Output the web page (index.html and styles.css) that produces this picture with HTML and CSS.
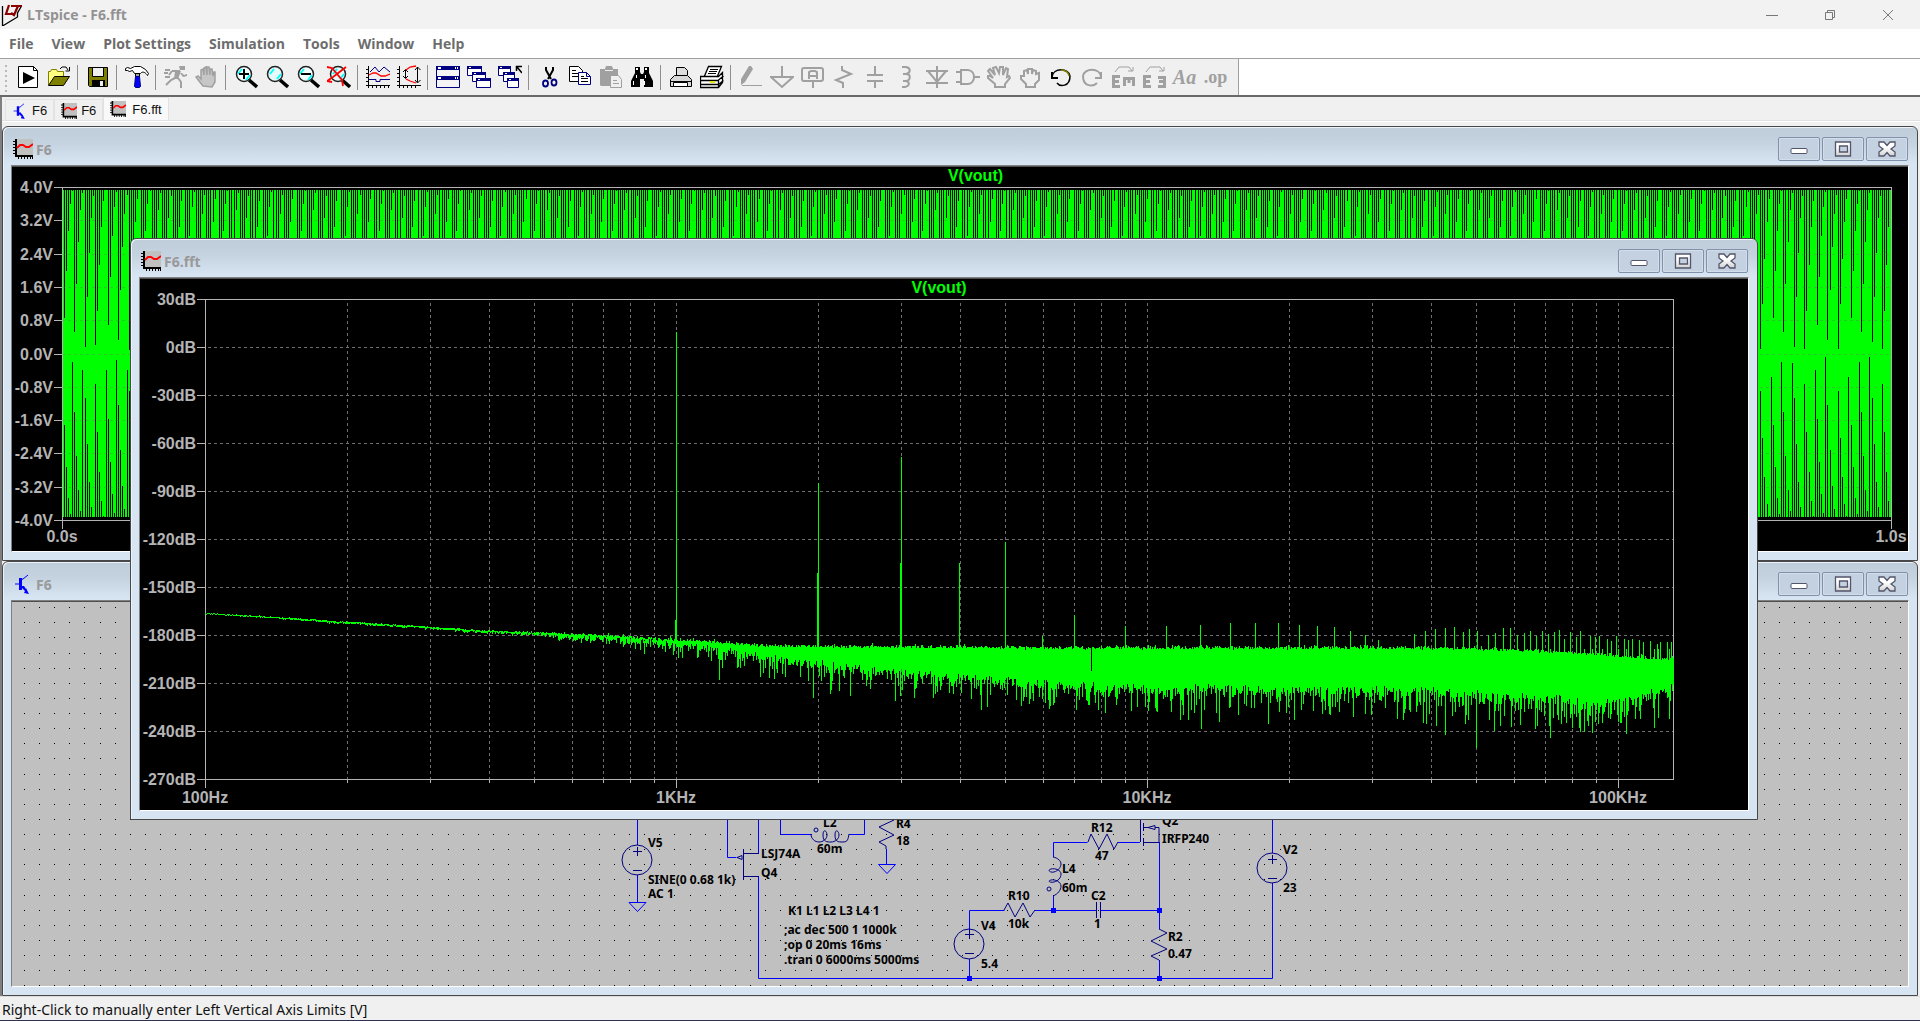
FILE: index.html
```html
<!DOCTYPE html>
<html lang="en">
<head>
<meta charset="utf-8">
<title>LTspice - F6.fft</title>
<link rel="stylesheet" href="styles.css">
</head>
<body>
<svg class="defs" aria-hidden="true">
  <symbol id="i-graph" viewBox="0 0 20 20"><path fill="#c0c0c0" d="M3 0h17v17H3z"/><path fill="#000" d="M2 0h2v18H2zM2 16h18v2H2zM0 2h2v1H0zM0 5h2v1H0zM0 8h2v1H0zM0 11h2v1H0zM0 14h2v1H0zM5 18h1v2H5zM8 18h1v2H8zM11 18h1v2h-1zM14 18h1v2h-1zM17 18h1v2h-1zM19 18h1v2h-1z"/><path fill="none" stroke="#f00" stroke-width="2" d="M4 9l3-3h3l3 2h3l4-3"/></symbol>
  <symbol id="i-npn" viewBox="0 0 20 20"><path fill="none" stroke="#00f" stroke-width="1" d="M2 10h5M7 6l3-1 5-4"/><path fill="#00f" d="M6 4h3v12H6zM9 12l2 0 2 3 0-1 3 6-5-1 1-2-3-3z"/></symbol>
  <linearGradient id="glyph" x1="0" y1="0" x2="0" y2="1"><stop offset="0.4" stop-color="#fff"/><stop offset="1" stop-color="#d0d0d0"/></linearGradient>
  <symbol id="w-min" viewBox="0 0 18 16"><rect x="1" y="7.500" width="16" height="5" rx="1" fill="#fff" stroke="#53566b"/></symbol>
  <symbol id="w-max" viewBox="0 0 18 16"><path fill="url(#glyph)" fill-rule="evenodd" stroke="#53566b" stroke-width="1.300" d="M1.500 1h15v14h-15zM5.500 5v6h8V5z"/></symbol>
  <symbol id="w-close" viewBox="0 0 18 16"><path fill="url(#glyph)" stroke="#53566b" stroke-width="1.300" d="M1 1h5l3 3.500L12 1h5v4l-4 3 4 3v4h-5l-3-3.500L6 15H1v-4l4-3-4-3z"/></symbol>
</svg>

<header class="titlebar">
  <svg class="logo" viewBox="0 0 22 22"><path fill="none" stroke="#000" stroke-width="1.300" d="M1.500 2v20l15-9v-4l4-7"/><path fill="none" stroke="#8b0000" stroke-width="2.200" d="M8 1L5 10h6"/><path fill="none" stroke="#8b0000" stroke-width="2.200" d="M10 2h11M17 2l-4 9-3-2"/></svg>
  <h1 class="app-title">LTspice - F6.fft</h1>
  <div class="sys">
    <button type="button" aria-label="Minimize"><svg viewBox="0 0 12 12"><path d="M0 6.500h12"/></svg></button>
    <button type="button" aria-label="Restore"><svg viewBox="0 0 12 12"><path d="M1.500 3.500h7v7h-7zM3.500 3.500v-2h7v7h-2"/></svg></button>
    <button type="button" aria-label="Close"><svg viewBox="0 0 12 12"><path d="M1 1l10 10M11 1L1 11"/></svg></button>
  </div>
</header>

<nav class="menu">
  <button type="button">File</button><button type="button">View</button><button type="button">Plot Settings</button><button type="button">Simulation</button><button type="button">Tools</button><button type="button">Window</button><button type="button">Help</button>
</nav>

<div class="toolrow">
<div class="toolbar" role="toolbar" aria-label="Main">
  <button type="button" aria-label="New schematic"><svg viewBox="0 0 24 24"><path fill="#fff" stroke="#000" d="M2.500 1.500h15l4 4v17h-19z"/><path fill="none" stroke="#000" d="M17.500 1.500v4h4"/><path d="M7 7l12 6-12 6z"/></svg></button>
  <button type="button" aria-label="Open"><svg viewBox="0 0 24 24"><path fill="#ffff80" stroke="#808000" d="M1.500 20V6.500h2l1-2h5l1 2h6v5"/><path fill="#808000" stroke="#000" d="M1.500 20.500l6-9h15l-6 9z"/><path fill="none" stroke="#000" d="M13 4l2-2h4l2 3M22.500 2v4h-4"/></svg></button>
  <i class="sep"></i>
  <button type="button" aria-label="Save"><svg viewBox="0 0 24 24"><path fill="#808000" stroke="#000" d="M2.500 2.500h19v19h-18l-1-1z"/><path fill="#efefef" stroke="#000" d="M6.500 2.500h11v9h-11z"/><path d="M6 15h13v6H6z"/><path fill="#efefef" d="M14 16h3v5h-3z"/></svg></button>
  <i class="sep"></i>
  <button type="button" aria-label="Control panel"><svg viewBox="0 0 24 24"><path fill="#fff" stroke="#000" d="M0.500 3.500l2-1 3 1 4-2h6l5 3 3 4-1 2c-2-3-4-4-6-3l-1 1h-6l-2-3-3 1-2-1-2 0z"/><path fill="#a0a0a0" stroke="#000" d="M10.500 8.500h4v3h-4z"/><path fill="#0000ff" stroke="#000080" d="M10.500 11.500h4l1 10-1 1h-4l-1-1z"/></svg></button>
  <i class="sep"></i>
  <button type="button" disabled aria-label="Run"><svg viewBox="0 0 24 24"><path class="g" d="M15 1h6v4h-5zM8 5h8v2H8zM11 6h6l-3 8h-4zM16 8h2l2 2 3-1v2l-4 1z"/><path class="gl2" d="M8 6L5 10M11 13l-4 2-5 5M14 13l3 4v6M1 5h5M0 8h4M1 12h5"/></svg></button>
  <button type="button" disabled aria-label="Halt"><svg viewBox="0 0 24 24"><path fill="#c6c6c6" stroke="#a0a0a0" stroke-width="1.500" d="M8 21l-4-5-3-4 2-1 3 3V5l2-1 1 6V3l2-1 1 8V2l2 0 1 8V4l2 0 1 7 1-4 1 0v10l-3 5z"/></svg></button>
  <i class="sep"></i>
  <button type="button" aria-label="Zoom in"><svg viewBox="0 0 24 24"><path stroke="#000" stroke-width="3.500" d="M15 15l8 7"/><circle cx="10" cy="9" r="7.500" fill="#f4ffff" stroke="#222" stroke-width="1.500"/><path stroke="#0ff" stroke-width="2" d="M4 9l4-5M12 15l4-5"/><path stroke="#000" stroke-width="2" d="M5 9h10M10 4v10"/></svg></button>
  <button type="button" aria-label="Zoom"><svg viewBox="0 0 24 24"><path stroke="#000" stroke-width="3.500" d="M15 15l8 7"/><circle cx="10" cy="9" r="7.500" fill="#e6fafa" stroke="#222" stroke-width="1.500"/><path stroke="#0ff" stroke-width="2" d="M5 9l4-5M12 14l4-5"/></svg></button>
  <button type="button" aria-label="Zoom out"><svg viewBox="0 0 24 24"><path stroke="#000" stroke-width="3.500" d="M15 15l8 7"/><circle cx="10" cy="9" r="7.500" fill="#f4ffff" stroke="#222" stroke-width="1.500"/><path stroke="#0ff" stroke-width="2" d="M4 9l4-5M12 15l4-5"/><path stroke="#000" stroke-width="2" d="M5 9h10"/></svg></button>
  <button type="button" aria-label="Zoom full extents"><svg viewBox="0 0 24 24"><path stroke="#000" stroke-width="3.500" d="M15 15l8 7"/><circle cx="11" cy="9" r="7.500" fill="#e6fafa" stroke="#222" stroke-width="1.500"/><path stroke="#0ff" stroke-width="2" d="M6 9l4-5M13 14l4-5"/><path fill="none" stroke="#f00" stroke-width="1.800" d="M0 2l5 1 10 12 1 6M19 2L6 12l-6 4 5 1"/></svg></button>
  <i class="sep"></i>
  <button type="button" aria-label="Autorange"><svg viewBox="0 0 24 24"><path stroke="#000" fill="none" d="M2.500 1v22M0 20.500h24M0 4.500h2M0 8.500h2M0 12.500h2M0 16.500h2M6.500 20v3M10.500 20v3M14.500 20v3M18.500 20v3M22.500 20v3"/><path stroke="#000080" fill="none" d="M4 7l5-5 4 5 5-5 6 5M3 14.500h7v2h4v-2h10"/><path stroke="#f00" fill="none" stroke-width="1.300" d="M3 10l4-2h3l5 3h4l5-2"/></svg></button>
  <button type="button" aria-label="Manual limits"><svg viewBox="0 0 24 24"><path stroke="#000" fill="none" d="M2.500 1v22M0 20.500h24M0 4.500h2M0 8.500h2M0 12.500h2M0 16.500h2M6.500 20v3M10.500 20v3M14.500 20v3M18.500 20v3M8.500 5v8M6 7l2.500-2.500L11 7M6 11l2.500 2.500L11 11M20.500 2v15M18 5l2.500-3 3 3M18 15l2.500 3 3-3"/><path stroke="#f00" fill="none" stroke-width="1.300" d="M9 5l4-3 6-1M9 14l4 2 6 2"/></svg></button>
  <i class="sep"></i>
  <button type="button" aria-label="Tile"><svg viewBox="0 0 24 24"><path fill="#f4f4f4" stroke="#000080" d="M.5 1.500h23v21H.5z"/><path fill="#000080" d="M0 1h24v4H0zM0 11h24v4H0z"/><path fill="#fff" d="M2 2h3v2H2zM19 2h1v2h-1zM21 2h1v2h-1zM2 12h3v2H2zM19 12h1v2h-1zM21 12h1v2h-1z"/></svg></button>
  <button type="button" aria-label="Cascade"><svg viewBox="0 0 24 24"><g fill="#fff" stroke="#000080"><path d="M.5 1.500h14v9H.5z"/><path d="M5.500 7.500h13v9h-13z"/><path d="M9.500 13.500h14v9h-14z"/></g><path fill="#000080" d="M0 1h15v3H0zM5 7h14v3H5zM9 13h15v3H9z"/><path fill="#fff" d="M2 2h2v1H2zM7 8h2v1H7zM11 14h2v1h-2z"/></svg></button>
  <button type="button" aria-label="Close all windows"><svg viewBox="0 0 24 24"><g fill="#fff" stroke="#000080"><path d="M.5 1.500h12v9H.5z"/><path d="M5.500 7.500h11v9h-11z"/><path d="M9.500 13.500h11v9h-11z"/></g><path fill="#000080" d="M0 1h13v3H0zM5 7h12v3H5zM9 13h12v3H9z"/><path fill="#fff" d="M2 2h2v1H2zM7 8h2v1H7zM11 14h2v1h-2z"/><path fill="none" stroke="#000" stroke-width="1.500" d="M18.500 6V1.500H24M19 2l5 6"/></svg></button>
  <i class="sep"></i>
  <button type="button" aria-label="Cut"><svg viewBox="0 0 24 24"><path fill="none" stroke="#000" stroke-width="2" d="M9 2v3l5 9M16 2v3l-5 9"/><g fill="none" stroke="#000080" stroke-width="1.800"><ellipse cx="8.500" cy="18.500" rx="2.500" ry="3"/><ellipse cx="17" cy="17.500" rx="2.500" ry="3"/></g></svg></button>
  <button type="button" aria-label="Copy"><svg viewBox="0 0 24 24"><path fill="#fff" stroke="#000" d="M1.500 1.500h9l4 4v11h-13z"/><path stroke="#000" d="M4 5.500h4M4 8.500h6M4 11.500h6"/><path fill="#fff" stroke="#000080" d="M10.500 7.500h8l4 4v8h-12zM18.500 7.500v4h4"/><path stroke="#000" d="M13 11.500h3M13 13.500h7M13 16.500h7"/></svg></button>
  <button type="button" disabled aria-label="Paste"><svg viewBox="0 0 24 24"><path class="g" d="M1 4h5l1-3h6l1 3h5v17H2l-1-1z"/><path fill="#efefef" stroke="#a0a0a0" d="M11.500 10.500h8l3 4v8h-11z"/><path stroke="#a0a0a0" d="M14 15.500h4M14 18.500h6"/><path fill="#efefef" d="M6 5h8v1H6z"/></svg></button>
  <button type="button" aria-label="Find"><svg viewBox="0 0 24 24"><path d="M5 2h5v5l1 2h2l1-2V2h5v6l4 8v6h-9v-8h-4v8H1v-6l4-8z"/><path fill="#fff" d="M6 3h2v2H6zM15 3h2v2h-2zM3 16h1v4H3zM14 16h1v4h-1zM6 10h1v3H6zM15 10h1v3h-1z"/></svg></button>
  <i class="sep"></i>
  <button type="button" aria-label="Print"><svg viewBox="0 0 24 24"><path fill="#ddd" stroke="#000" d="M7.500 10V2.500h8l3 3V10"/><path fill="#d8d8d8" stroke="#000" d="M1.500 14.500l4-4h13l4 4v7h-21zM1.500 16.500h21"/><path fill="#fff" stroke="#000" d="M4.500 17.500h14v4h-14z"/></svg></button>
  <button type="button" aria-label="Print setup"><svg viewBox="0 0 24 24"><path fill="#fff" stroke="#000" stroke-width="1.300" d="M4.500 11l4-9.500h13L17.500 11M.5 11.500h18l4-4v10l-4 5H.5zM.5 15.500h18v7M18.500 15l5-4M.5 19.500h18l5-4"/><path stroke="#000" d="M10 4.500h8M9 6.500h8M8 8.500h8"/><path fill="#e8e800" d="M10 16h5v2h-5z"/></svg></button>
  <i class="sep"></i>
  <button type="button" disabled aria-label="Wire"><svg viewBox="0 0 24 24"><path class="g" d="M2 20V14L10 1h2l2 3-8 13z"/><path class="gl1" d="M3 20.500h20"/></svg></button>
  <button type="button" disabled aria-label="Ground"><svg viewBox="0 0 24 24"><path class="gl2" d="M12 1v11M1 12h22L12 22z"/></svg></button>
  <button type="button" disabled aria-label="Label net"><svg viewBox="0 0 24 24"><rect class="gl2" x="1" y="3" width="21" height="13" rx="2"/><path class="gl2" d="M12 16v7M8 14V7l2-1h4l2 1v7M8 11h8"/></svg></button>
  <button type="button" disabled aria-label="Resistor"><svg viewBox="0 0 24 24"><path class="gl2" d="M10 1v4l9 4-15 6 7 3v5"/></svg></button>
  <button type="button" disabled aria-label="Capacitor"><svg viewBox="0 0 24 24"><path class="gl2" d="M12 1v9M12 16v7M4 10h16M4 16h16"/></svg></button>
  <button type="button" disabled aria-label="Inductor"><svg viewBox="0 0 24 24"><path class="gl2" d="M8 2h4c5 1 5 6 0 7h-3 3c5 0 5 6 0 7h-3 3c4 1 4 5-1 6H8"/></svg></button>
  <button type="button" disabled aria-label="Diode"><svg viewBox="0 0 24 24"><path class="gl2" d="M12 1v22M1 6h22M3 6l9 11 9-11M1 18h22"/></svg></button>
  <button type="button" disabled aria-label="Component"><svg viewBox="0 0 24 24"><path class="gl2" d="M0 7h5M0 17h5M5 5h7c8 1 8 13 0 14H5zM18 12h6"/></svg></button>
  <button type="button" disabled aria-label="Move"><svg viewBox="0 0 24 24"><path class="gl2" d="M8 22v-3L1 13v-2l2 0 3 2-5-7 2-2 5 6L6 3l3-1 3 6 1-6h3l0 8 3-7 2 1-1 8 2-1 1 2-5 6v3z"/></svg></button>
  <button type="button" disabled aria-label="Drag"><svg viewBox="0 0 24 24"><path class="gl2" d="M8 22v-3l-5-5v-3h3V6l3-1 1 4V4h4v5l1-4 3 1v3l3-1v7l-4 4v3z"/></svg></button>
  <button type="button" aria-label="Undo"><svg viewBox="0 0 24 24"><path fill="none" stroke="#000" stroke-width="1.500" d="M3 12c1-10 17-9 18-1 0 11-10 11-13 7"/><path fill="none" stroke="#808000" stroke-width="1.500" d="M12 5c5 0 8 3 8 6"/><path fill="none" stroke="#000" stroke-width="2" d="M3 7v6h6"/></svg></button>
  <button type="button" disabled aria-label="Redo"><svg viewBox="0 0 24 24"><path class="gl2" d="M21 12C20 2 4 3 3 11c0 11 10 11 14 7M21 7v6h-6"/></svg></button>
  <button type="button" disabled aria-label="Rotate"><svg viewBox="0 0 24 24"><path class="gl1" d="M4 7l4-5h10l3 4M17 6h5V2"/><path class="gl3" d="M9 11.500H2.500v10H9M2 16.500h6M12 13.500h12M13.500 12v9M18 12v6M22.500 12v9"/></svg></button>
  <button type="button" disabled aria-label="Mirror"><svg viewBox="0 0 24 24"><path class="gl1" d="M4 7l4-5h10l3 4M17 6h5V2"/><path class="gl3" d="M9 11.500H2.500v10H9M2 16.500h6M16 12.500h6.500v9H16M17 16.500h6"/></svg></button>
  <button type="button" disabled class="txt aa">Aa</button>
  <button type="button" disabled class="txt op">.op</button>
</div>
</div>

<div class="tabs" role="tablist">
  <button type="button" role="tab"><svg><use href="#i-npn"/></svg>F6</button>
  <button type="button" role="tab"><svg><use href="#i-graph"/></svg>F6</button>
  <button type="button" role="tab" class="active" aria-selected="true"><svg><use href="#i-graph"/></svg>F6.fft</button>
</div>

<main class="mdi">
  <section class="win">
    <header class="wintitle"><svg class="wicon"><use href="#i-graph"/></svg><h2>F6</h2>
      <div class="winbtns"><button type="button" aria-label="Minimize"><svg><use href="#w-min"/></svg></button><button type="button" aria-label="Maximize"><svg><use href="#w-max"/></svg></button><button type="button" aria-label="Close"><svg><use href="#w-close"/></svg></button></div></header>
    <div class="client plot"><svg id="wave"></svg></div>
  </section>

  <section class="win">
    <header class="wintitle"><svg class="wicon"><use href="#i-npn"/></svg><h2>F6</h2>
      <div class="winbtns"><button type="button" aria-label="Minimize"><svg><use href="#w-min"/></svg></button><button type="button" aria-label="Maximize"><svg><use href="#w-max"/></svg></button><button type="button" aria-label="Close"><svg><use href="#w-close"/></svg></button></div></header>
    <div class="client sheet"><svg id="schematic">
      <path id="dots" fill="#000"/>
      <g transform="translate(-12 -601)">
        <g class="sch-text">
          <text x="648" y="847">V5</text><text x="648" y="884">SINE(0 0.68 1k)</text><text x="648" y="898">AC 1</text>
          <text x="761" y="858">LSJ74A</text><text x="761" y="877">Q4</text>
          <text x="823" y="827">L2</text><text x="817" y="853">60m</text>
          <text x="896" y="828">R4</text><text x="896" y="845">18</text>
          <text x="788" y="915">K1 L1 L2 L3 L4 1</text><text x="784" y="934">;ac dec 500 1 1000k</text><text x="784" y="949">;op 0 20ms 16ms</text><text x="784" y="964">.tran 0 6000ms 5000ms</text>
          <text x="981" y="930">V4</text><text x="981" y="968">5.4</text>
          <text x="1008" y="900">R10</text><text x="1008" y="928">10k</text>
          <text x="1091" y="832">R12</text><text x="1095" y="860">47</text>
          <text x="1062" y="873">L4</text><text x="1062" y="892">60m</text>
          <text x="1091" y="900">C2</text><text x="1094" y="928">1</text>
          <text x="1162" y="825">Q2</text><text x="1162" y="843">IRFP240</text>
          <text x="1168" y="941">R2</text><text x="1168" y="958">0.47</text>
          <text x="1283" y="854">V2</text><text x="1283" y="892">23</text>
        </g>
        <path class="wire" d="M637.500 780v65M637.500 875v27M629 902.500h17l-8.500 9zM727.500 780v77.500h9M758.500 780v73M758.500 876v102.500H1272.500V883M780.500 780v54.500h31M849 834.500h15.500V780M886.500 849v15M878.500 864.500h17l-8.500 9zM969.500 930v-19.500h35M969.500 959v19M1035 910.500h61M1100 910.500h59M1053.500 910v-14M1053.500 857v-14.500h34M1118 842.500h22M1159.500 842v87M1159.500 960v18M1272.500 780v73"/>
        <path class="part" d="M637.500 847v9M633 851.500h9M633 870.500h9M743.500 849v31M743 853.500h16M743 876.500h16M737 857.500l5-2v4zM811 834c0 5 4 8 8 8s8-3 8-7-4-7-4 0 4 7 8 7 8-3 8-7-4-7-4 0 3 7 8 7 5-3 6-8M886 816l8 4-15 7 15 8-15 7 7 4v3M969.500 930v9M965 934.500h9M965 953.500h9M1004 910l4-7 7 14 8-14 7 14 5-7M1088 842l3-8 8 15 8-15 7 15 4-7M1096.500 902v16M1100.500 902v16M1053 857c5 1 8 4 8 7s-3 7-7 8-7-2-3-3 10 1 10 5-3 7-7 8-7-1-3-2 10 2 10 6-3 8-8 10M1140.500 780v62M1143.500 823v8M1143.500 838v8M1143 827.500h5l7-2v4l-7-2M1155 827.500h4v15M1143 842.500h16M1159 929l8 4-16 8 16 8-16 7 8 4M1272.500 855v9M1268 859.500h9M1268 878.500h9"/>
        <g class="part"><circle cx="637" cy="860" r="15"/><circle cx="969" cy="944" r="15"/><circle cx="1272" cy="868" r="15"/><circle cx="816" cy="830" r="2"/><circle cx="1049" cy="889" r="2"/></g>
        <path fill="#00f" d="M967 976h5v5h-5zM1051 908h5v5h-5zM1157 908h5v5h-5zM1157 976h5v5h-5z"/>
      </g>
    </svg></div>
  </section>

  <section class="win front">
    <header class="wintitle"><svg class="wicon"><use href="#i-graph"/></svg><h2>F6.fft</h2>
      <div class="winbtns"><button type="button" aria-label="Minimize"><svg><use href="#w-min"/></svg></button><button type="button" aria-label="Maximize"><svg><use href="#w-max"/></svg></button><button type="button" aria-label="Close"><svg><use href="#w-close"/></svg></button></div></header>
    <div class="client plot"><svg id="fft"></svg></div>
  </section>
</main>

<footer class="status">Right-Click to manually enter Left Vertical Axis Limits [V]</footer>
<script src="plots.js"></script>
</body>
</html>
```
FILE: styles.css
```css
* { box-sizing: border-box; }
body {
  margin: 0;
  min-height: 100vh;
  display: flex;
  flex-direction: column;
  background: #f0f0f0;
  font-family: "Open Sans", "Noto Sans", sans-serif;
  overflow: hidden;
}
button { font: inherit; color: inherit; background: none; border: 0; padding: 0; margin: 0; }
h1, h2 { margin: 0; }
svg { display: block; }
.defs { position: absolute; width: 0; height: 0; }

.titlebar { display: flex; align-items: center; height: 29px; background: #f2f2f2; padding: 0 3px 0 1px; }
.logo { width: 22px; height: 22px; }
.app-title { flex: 1; padding-left: 4px; font-size: 14px; font-weight: 700; color: #929292; }
.sys { display: flex; }
.sys button { width: 58px; height: 29px; display: grid; place-items: center; }
.sys svg { width: 12px; height: 12px; fill: none; stroke: #777; }

.menu { display: flex; height: 29px; background: #fff; gap: 18px; padding-left: 9px; align-items: center; font-size: 14px; font-weight: 700; color: #6d6d6d; }

.toolrow { display: flex; background: #fff; border-top: 1px solid #a0a0a0; border-bottom: 2px solid #696969; height: 39px; }
.toolbar { display: flex; align-items: center; background: #f0f0f0; border-right: 1px solid #a0a0a0; padding: 0 7px 0 12px; position: relative; }
.toolbar::before { content: ""; position: absolute; left: 5px; top: 6px; width: 2px; height: 27px; background: repeating-linear-gradient(#b8b8b8 0 2px, transparent 2px 5px); }
.toolbar button { width: 31px; height: 36px; display: grid; place-items: center; }
.toolbar svg { width: 24px; height: 24px; }
.sep { width: 1px; height: 25px; margin: 0 4px 0 3px; background: #8e8e8e; }
.g { fill: #a0a0a0; }
.gl1, .gl2, .gl3 { fill: none; stroke: #a0a0a0; stroke-width: 1; }
.gl2 { stroke-width: 2; }
.gl3 { stroke-width: 3; }
.toolbar .txt { color: #a0a0a0; font-size: 20px; line-height: 20px; }
.toolbar .aa { font-family: "Liberation Serif", serif; font-style: italic; font-weight: 700; }
.toolbar .op { font-family: "Liberation Serif", serif; font-size: 18px; font-weight: 700; }

.tabs { display: flex; align-items: flex-start; height: 29px; padding: 0 3px; border-left: 2px solid #808080; box-shadow: inset 0 -4px #f0f0f0, inset 0 -5px #fff, inset 0 -6px #e0e0e0; font-family: "Liberation Sans", sans-serif; font-size: 13px; color: #111; }
.tabs button { display: flex; align-items: center; gap: 4px; height: 22px; margin-top: 2px; padding: 0 6px; border: 1px solid #e2e2e2; border-bottom: 0; }
.tabs svg { width: 16px; height: 16px; }
.tabs .active { height: 23px; margin-top: 0; gap: 6px; background: #f9f9f9; }

.mdi { flex: 1; display: flex; flex-direction: column; position: relative; margin: 0 2px 0 0; padding-left: 2px; background: #f0f0f0; box-shadow: inset 2px 0 #808080; }
.win { flex: 1; min-height: 0; display: flex; flex-direction: column; padding: 0 8px 8px; background: linear-gradient(#bfcddb, #c5d2e0 16px, #d7e4f2 36px); border: 1px solid #484848; border-radius: 6px 6px 0 0; box-shadow: inset 1px 1px #edf3fa; }
.wintitle { display: flex; align-items: center; height: 38px; padding: 6px 1px 0 2px; }
.wintitle h2 { flex: 1; padding-left: 3px; font-size: 14px; font-weight: 700; color: #999; }
.wicon { width: 20px; height: 20px; }
.winbtns { display: flex; gap: 2px; }
.winbtns button { width: 42px; height: 24px; display: grid; place-items: center; border: 1px solid #8290ac; border-radius: 2px; box-shadow: inset 0 0 0 1px #d3deeb; background: #c4d1e0; }
.winbtns svg { width: 18px; height: 16px; }
.client { flex: 1; min-height: 0; position: relative; overflow: hidden; border: 1px solid; border-color: #808080 #fff #fff #808080; box-shadow: inset 0 1px #505050; }
.client svg { position: absolute; left: 0; top: 0; width: 100%; height: 100%; }
.plot { background: #000; }
.sheet { background: #c0c0c0; }
.front { position: absolute; left: 130px; right: 160px; top: 112px; bottom: 176px; }

.plot text { font: 700 16px "Liberation Sans", sans-serif; fill: #b4b4b4; }
.plot .trace-name { fill: #0f0; }
.end { text-anchor: end; }
.mid { text-anchor: middle; }
.axis, .grid, .trace, .gap { fill: none; stroke-width: 1; shape-rendering: crispEdges; }
.axis { stroke: #b4b4b4; }
.grid { stroke: #6e6e6e; stroke-dasharray: 3 3; }
.trace { stroke: #0f0; }
.gap { stroke: #000; }
.body { fill: #0f0; }

.sch-text { font: 700 12px "Noto Sans", sans-serif; fill: #000; }
.wire { fill: none; stroke: #00f; }
.part { fill: none; stroke: #000080; }

.status { height: 25px; border-top: 1px solid #dcdcdc; border-bottom: 1px solid #303050; padding-left: 2px; font-family: "Noto Sans", sans-serif; font-size: 14px; line-height: 26px; color: #111; }
```
FILE: plots.js
```js
(function () {
  var NS = 'http://www.w3.org/2000/svg';
  function add(svg, name, cls, attrs, text) {
    var e = document.createElementNS(NS, name);
    if (cls) e.setAttribute('class', cls);
    for (var k in attrs) e.setAttribute(k, attrs[k]);
    if (text) e.textContent = text;
    svg.appendChild(e);
  }
  function random(seed) {
    return function () {
      seed = (seed * 1664525 + 1013904223) % 4294967296;
      return seed / 4294967296;
    };
  }

  // Time-domain trace: 1 kHz sine, far denser than the pixel columns.
  function drawWave() {
    var svg = document.getElementById('wave');
    svg.textContent = '';
    var W = svg.clientWidth, H = svg.clientHeight;
    var l = 50, r = W - 17, t = 21, b = H - 31, i;
    var axis = 'M' + l + '.5 ' + (b + 9) + 'V' + t + '.5H' + r + '.5V' + (b + 9) + 'M' + l + ' ' + b + '.5H' + r;
    var grid = '';
    for (i = 0; i <= 10; i++) {
      var y = Math.round(t + (b - t) * i / 10);
      var v = 4 - i * 0.8;
      axis += 'M' + (l - 8) + ' ' + y + '.5h8';
      if (i % 10) grid += 'M' + l + ' ' + y + '.5H' + r;
      add(svg, 'text', 'end', { x: l - 9, y: y + 6 }, (Math.abs(v) < 0.01 ? '0.0' : v.toFixed(1)) + 'V');
    }
    add(svg, 'rect', 'body', { x: l, y: t + 3, width: r - l, height: b - t - 6 });
    var gap = '', half = (b - t - 6) / 2;
    function depth(f, x) {
      return Math.min(half * (0.88 + 0.1 * Math.abs(Math.sin(x / 14))), half * (1 - Math.cos(f * 1.65)));
    }
    var period = 11.1, step = 2.1;
    for (var x = 2; x < r - l - 1; x += step) {
      var f = 1 - (x % period) / period;
      var g = 1 - ((x + 1.6) % period) / period;
      var px = Math.floor(l + x) + 0.5;
      var d = Math.round(depth(f, x)), e = Math.round(depth(g, x + 20));
      if (d > 0) gap += 'M' + px + ' ' + (t + 3) + 'v' + d;
      if (e > 0) gap += 'M' + px + ' ' + (b - 3) + 'v' + -e;
    }
    add(svg, 'path', 'gap', { d: gap });
    add(svg, 'path', 'grid', { d: grid, 'stroke-opacity': 0.35 });
    add(svg, 'path', 'axis', { d: axis });
    add(svg, 'text', 'mid', { x: l, y: b + 22 }, '0.0s');
    add(svg, 'text', 'mid', { x: r, y: b + 22 }, '1.0s');
    add(svg, 'text', 'mid trace-name', { x: (l + r) / 2 - 1, y: 15 }, 'V(vout)');
  }

  // Noise band: [offset across the plot, upper edge, lower edge, typical dip]
  var band = [[0, 314, 314, 0], [70, 318, 319, 1], [142, 323, 324, 2], [210, 327, 329, 2], [284, 332, 334, 3],
    [345, 334, 337, 4], [420, 338, 341, 8], [471, 341, 346, 10], [520, 344, 352, 16], [565, 347, 359, 18],
    [655, 348, 370, 22], [755, 348, 379, 22], [850, 349, 386, 22], [945, 349, 389, 24], [1115, 349, 391, 26],
    [1225, 349, 392, 28], [1295, 351, 397, 26], [1350, 353, 400, 28], [1395, 356, 405, 26], [1440, 359, 396, 26], [1468, 360, 388, 26]];
  var peaks = [[471, 33], [613, 184], [696, 158], [695, 264], [612, 274], [754, 264], [800, 243], [837, 337], [869, 316],
    [920, 327], [961, 327], [995, 326], [1025, 324], [1050, 324], [1073, 324], [1094, 326], [1112, 327], [1129, 328],
    [1145, 332], [1160, 336], [1173, 341], [1209, 335], [1220, 332], [1230, 330], [1240, 329], [1249, 328], [1258, 333], [1264, 330],
    [1272, 332], [1283, 336], [1290, 334], [1298, 329], [1305, 329], [1312, 336], [1319, 334], [1325, 332], [1331, 337],
    [1337, 332], [1343, 335], [1349, 333], [1354, 331], [1359, 340], [1365, 333], [1371, 338], [1375, 332], [1385, 337],
    [1390, 338], [1394, 337], [1402, 340], [1406, 342], [1411, 337], [1419, 340], [1423, 341], [1427, 340], [1434, 341],
    [1438, 343], [1445, 342], [1452, 345], [1455, 343], [1462, 343], [1466, 343], [470, 321]];
  var dips = [[514, 381], [517, 369], [532, 369], [558, 374], [439, 355], [608, 399], [625, 395], [634, 392], [645, 397],
    [690, 402], [695, 397], [728, 399], [766, 400], [776, 411], [782, 408], [816, 407], [824, 405], [884, 406], [900, 414],
    [911, 406], [952, 413], [966, 413], [975, 421], [983, 421], [996, 430], [1014, 423], [1033, 416], [1063, 425],
    [1089, 421], [1148, 418], [1198, 421], [1218, 424], [1221, 425], [1231, 427], [1240, 436], [1271, 449], [1289, 432],
    [1295, 427], [1330, 430], [1345, 439], [1375, 433], [1379, 433], [1387, 434], [1397, 424], [1413, 423], [1421, 435],
    [1449, 429], [1453, 419], [1464, 420]];

  function drawFft() {
    var svg = document.getElementById('fft');
    svg.textContent = '';
    var W = svg.clientWidth, H = svg.clientHeight;
    var l = 65, r = W - 75, t = 21, b = H - 31;
    var w = r - l, h = b - t, i;
    var axis = 'M' + l + '.5 ' + (b + 8) + 'V' + t + '.5H' + r + '.5V' + b + '.5H' + l, grid = '';
    for (i = 0; i <= 10; i++) {
      var gy = Math.round(t + h * i / 10);
      axis += 'M' + (l - 8) + ' ' + gy + '.5h8';
      if (i % 10) grid += 'M' + (l + 3) + ' ' + gy + '.5H' + r;
      add(svg, 'text', 'end', { x: l - 9, y: gy + 6 }, (30 - 30 * i) + 'dB');
    }
    var decade = w * 471 / 1468;
    ['100Hz', '1KHz', '10KHz', '100KHz'].forEach(function (name, d) {
      for (var m = 1; m < 10; m++) {
        var gx = Math.round(l + decade * (d + Math.log10(m)));
        if (gx >= r) break;
        if (d + m > 1) grid += 'M' + gx + '.5 ' + (t + 4) + 'V' + b;
        axis += 'M' + gx + '.5 ' + b + 'v' + (m === 1 ? 9 : 4);
      }
      add(svg, 'text', 'mid', { x: l + Math.round(decade * d), y: b + 24 }, name);
    });

    var rnd = random(7), sx = w / 1468, sy = h / 480, trace = '', k = 0;
    for (var x = 0; x <= w; x++) {
      var u = x / sx;
      while (k < band.length - 2 && u > band[k + 1][0]) k++;
      var a = band[k], c = band[k + 1], q = (u - a[0]) / (c[0] - a[0]);
      var top = a[1] + (c[1] - a[1]) * q, low = a[2] + (c[2] - a[2]) * q, dip = a[3] + (c[3] - a[3]) * q;
      var wob = Math.min(3, dip / 3);
      top += (rnd() - 0.6) * wob * (rnd() < 0.15 ? 2 : 1);
      low += (rnd() - 0.5) * wob * 3 + dip * Math.pow(rnd(), 4);
      if (dip < 4) {
        var now = top + rnd() - 0.5;
        trace += 'M' + (l + x) + '.5 ' + Math.round(t + now * sy) + 'V' + Math.round(t + (now + 1 + dip * rnd() * 0.8) * sy);
      } else {
        trace += 'M' + (l + x) + '.5 ' + Math.round(t + top * sy) + 'V' + Math.round(t + Math.max(low, top + 2) * sy);
      }
    }
    add(svg, 'path', 'grid', { d: grid });
    add(svg, 'path', 'axis', { d: axis });
    peaks.forEach(function (p) {
      trace += 'M' + (l + Math.round(p[0] * sx)) + '.5 ' + Math.round(t + p[1] * sy) + 'V' + Math.round(t + 345 * sy + (p[0] > 500 ? 20 : 0));
    });
    dips.forEach(function (p) {
      trace += 'M' + (l + Math.round(p[0] * sx)) + '.5 ' + Math.round(t + (p[0] < 500 ? 342 : 350) * sy) + 'V' + Math.round(t + p[1] * sy);
    });
    add(svg, 'path', 'trace', { d: trace });
    add(svg, 'path', 'gap', { d: 'M' + (l + Math.round(886 * sx)) + '.5 ' + (t + 348) + 'v24' });
    add(svg, 'text', 'mid trace-name', { x: l + w / 2, y: 15 }, 'V(vout)');
  }

  function drawDots() {
    var svg = document.getElementById('schematic'), d = '';
    var W = svg.clientWidth, H = svg.clientHeight, pitch = 15.129;
    for (var y = 6.65; y < H; y += pitch)
      for (var x = 12.4; x < W; x += pitch)
        d += 'M' + Math.floor(x) + ' ' + Math.floor(y) + 'h1v1h-1z';
    document.getElementById('dots').setAttribute('d', d);
  }

  function draw() { drawWave(); drawFft(); drawDots(); }
  window.addEventListener('resize', draw);
  draw();
})();
```
